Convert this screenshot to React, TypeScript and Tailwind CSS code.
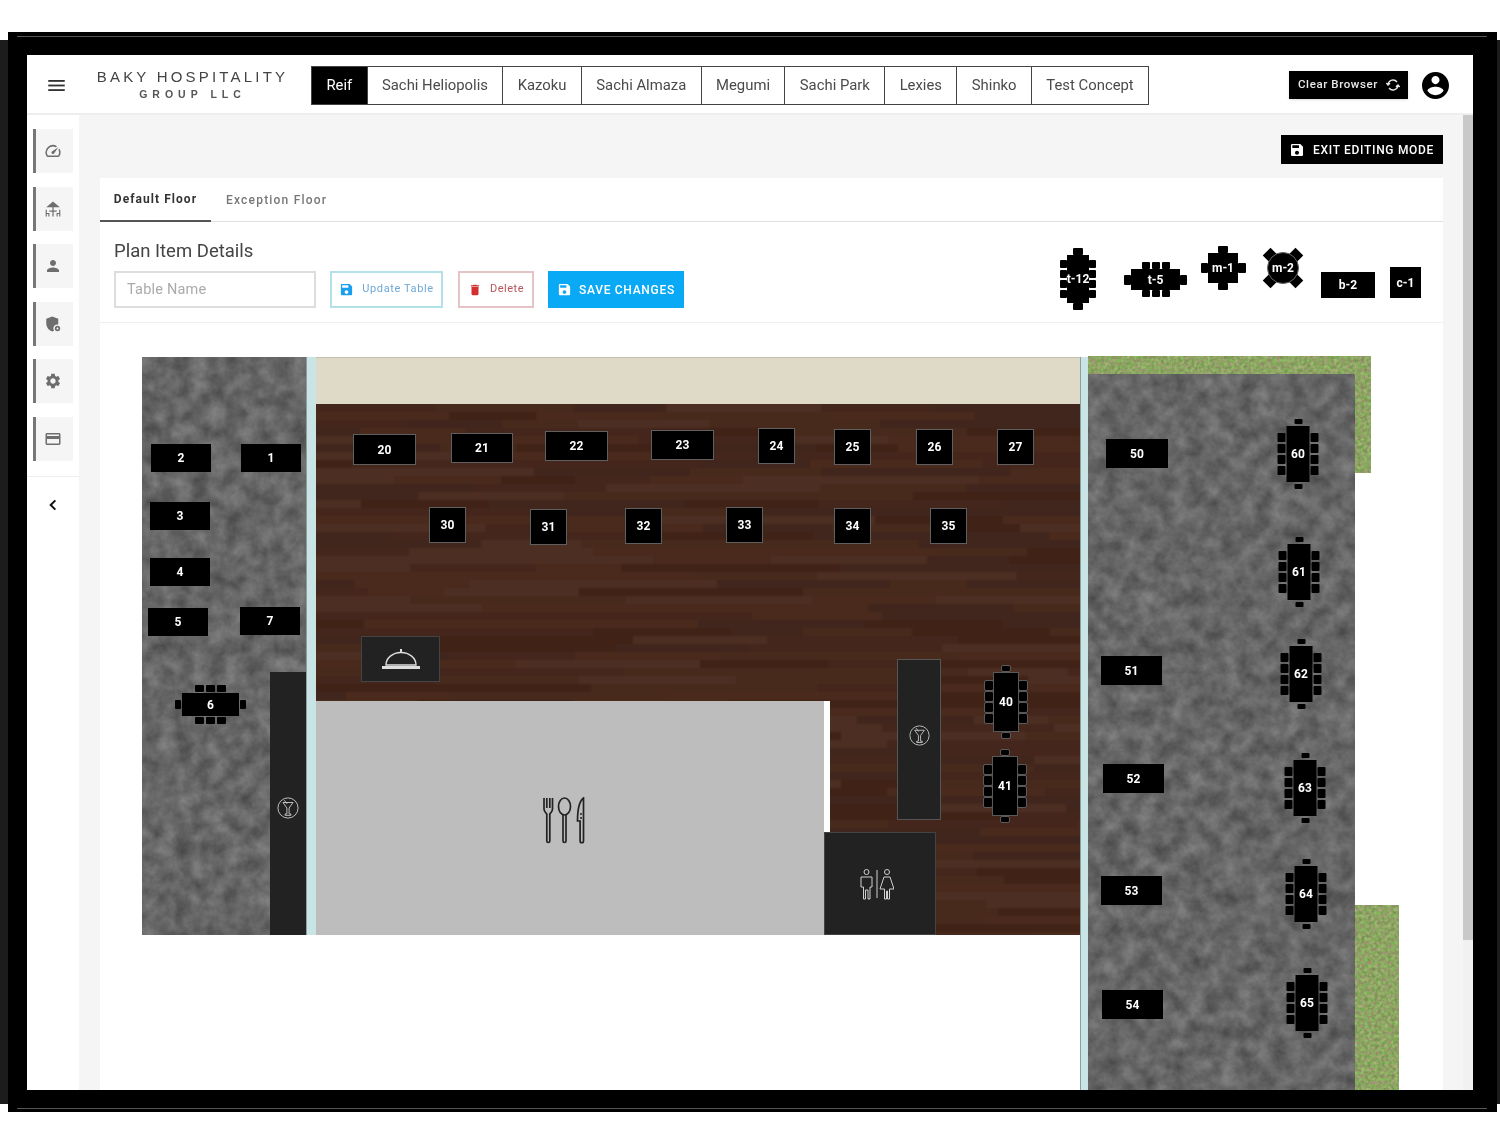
import React from 'react';

const TABS = ['Reif', 'Sachi Heliopolis', 'Kazoku', 'Sachi Almaza', 'Megumi', 'Sachi Park', 'Lexies', 'Shinko', 'Test Concept'];

// canvas origin on the page, the plan below is measured in page pixels
const OX = 100;
const OY = 323;

const RECTS: [string, number, number, number, number, boolean][] = [
  ['2', 151, 444, 60, 28, false],
  ['1', 241, 444, 60, 28, false],
  ['3', 150, 502, 60, 28, false],
  ['4', 150, 558, 60, 28, false],
  ['5', 148, 608, 60, 28, false],
  ['7', 240, 607, 60, 28, false],
  ['20', 353, 434, 63, 31, true],
  ['21', 451, 433, 62, 30, true],
  ['22', 545, 431, 63, 30, true],
  ['23', 651, 430, 63, 30, true],
  ['24', 758, 428, 37, 36, true],
  ['25', 834, 429, 37, 36, true],
  ['26', 916, 429, 37, 36, true],
  ['27', 997, 429, 37, 36, true],
  ['30', 429, 507, 37, 36, true],
  ['31', 530, 509, 37, 36, true],
  ['32', 625, 508, 37, 36, true],
  ['33', 726, 507, 37, 36, true],
  ['34', 834, 508, 37, 36, true],
  ['35', 930, 508, 37, 36, true],
  ['50', 1106, 439, 62, 29, false],
  ['51', 1101, 656, 61, 29, false],
  ['52', 1103, 764, 61, 29, false],
  ['53', 1101, 876, 61, 29, false],
  ['54', 1102, 990, 61, 29, false],
];

const LONG_TABLES: [string, number, number, boolean][] = [
  ['40', 1006, 702, true],
  ['41', 1005, 786, true],
  ['60', 1298, 454, false],
  ['61', 1299, 572, false],
  ['62', 1301, 674, false],
  ['63', 1305, 788, false],
  ['64', 1306, 894, false],
  ['65', 1307, 1003, false],
];

function woodPlanks() {
  const colors = ['#45281d', '#4a2b1f', '#41251b', '#4d2e22', '#3f2319', '#47291e'];
  const planks: { x: number; y: number; w: number; c: string }[] = [];
  let seed = 17;
  const next = () => {
    seed = (seed * 9301 + 49297) % 233280;
    return seed / 233280;
  };
  for (let y = 0; y < 540; y += 8) {
    let x = -Math.floor(next() * 120);
    while (x < 770) {
      const w = 70 + Math.floor(next() * 170);
      planks.push({ x, y, w, c: colors[Math.floor(next() * colors.length)] });
      x += w;
    }
  }
  return planks;
}

const PLANKS = woodPlanks();

const Noise = ({ id, freq, seed, matrix }: { id: string; freq: string; seed: number; matrix: string }) => (
  <svg className="absolute inset-0 w-full h-full" aria-hidden="true">
    <filter id={id} x="0" y="0" width="100%" height="100%" colorInterpolationFilters="sRGB">
      <feTurbulence type="fractalNoise" baseFrequency={freq} numOctaves={5} seed={seed} />
      <feColorMatrix type="matrix" values={matrix} />
    </filter>
    <rect width="100%" height="100%" filter={`url(#${id})`} />
  </svg>
);

const CONCRETE = '0.28 0 0 0 0.26 0.28 0 0 0 0.26 0.28 0 0 0 0.26 0 0 0 0 1';
const GRASS = '0.35 0 0 0 0.38 0 0.35 0 0 0.47 0.3 0 0 0 0.24 0 0 0 0 1';

const Wood = () => (
  <svg className="absolute inset-0 w-full h-full" aria-hidden="true">
    <filter id="plankblur">
      <feGaussianBlur stdDeviation="1" />
    </filter>
    <g filter="url(#plankblur)">
      {PLANKS.map((p, i) => (
        <rect key={i} x={p.x} y={p.y} width={p.w} height={8} fill={p.c} />
      ))}
    </g>
  </svg>
);

const Cell = ({ className }: { className: string }) => <div className={`bg-black rounded-[1px] ${className}`} />;

const Repeat = ({ n, className }: { n: number; className: string }) => (
  <>
    {Array.from({ length: n }).map((_, i) => (
      <Cell key={i} className={className} />
    ))}
  </>
);

const LongTable = ({ label, outlined, big }: { label: string; outlined?: boolean; big?: boolean }) => {
  const line = outlined ? 'outline outline-1 outline-[#5a5a5a]' : '';
  return (
    <div className="flex flex-col items-center text-white font-bold text-[12px]">
      <Cell className={`${big ? 'w-[10px] h-[7px]' : 'w-[8px] h-[5px]'} ${line}`} />
      <div className={`flex items-center ${big ? 'my-0' : 'my-[2px] gap-[1px]'}`}>
        <div className="flex flex-col gap-[2px]">
          <Repeat n={4} className={`${big ? 'w-[7px] h-[8px]' : 'w-[8px] h-[9px]'} ${line}`} />
        </div>
        <div className={`flex items-center justify-center whitespace-nowrap bg-black ${line} ${big ? 'w-[22px] h-[48px]' : outlined ? 'w-[24px] h-[58px]' : 'w-[23px] h-[56px]'}`}>
          {label}
        </div>
        <div className="flex flex-col gap-[2px]">
          <Repeat n={4} className={`${big ? 'w-[7px] h-[8px]' : 'w-[8px] h-[9px]'} ${line}`} />
        </div>
      </div>
      <Cell className={`${big ? 'w-[10px] h-[7px]' : 'w-[8px] h-[5px]'} ${line}`} />
    </div>
  );
};

const WideTable = ({ label, big }: { label: string; big?: boolean }) => (
  <div className={`flex items-center text-white font-bold text-[12px] ${big ? '' : 'gap-[1px]'}`}>
    <Cell className={big ? 'w-[7px] h-[10px]' : 'w-[6px] h-[9px]'} />
    <div className={`flex flex-col items-center ${big ? '' : 'gap-[1px]'}`}>
      <div className="flex gap-[2px]">
        <Repeat n={3} className={big ? 'w-[8px] h-[7px]' : 'w-[9px] h-[7px]'} />
      </div>
      <div className={`flex items-center justify-center bg-black ${big ? 'w-[49px] h-[21px]' : 'w-[57px] h-[23px]'}`}>{label}</div>
      <div className="flex gap-[2px]">
        <Repeat n={3} className={big ? 'w-[8px] h-[7px]' : 'w-[9px] h-[7px]'} />
      </div>
    </div>
    <Cell className={big ? 'w-[7px] h-[10px]' : 'w-[6px] h-[9px]'} />
  </div>
);

const SquareTable = () => (
  <div className="grid grid-cols-[7px_30px_8px] grid-rows-[7px_30px_7px] place-items-center text-white font-bold text-[12px]">
    <span />
    <Cell className="w-[10px] h-[7px]" />
    <span />
    <Cell className="w-[7px] h-[10px]" />
    <div className="w-[30px] h-[30px] bg-black flex items-center justify-center">m-1</div>
    <Cell className="w-[8px] h-[10px]" />
    <span />
    <Cell className="w-[10px] h-[7px]" />
    <span />
  </div>
);

const RoundTable = () => (
  <div className="relative w-[40px] h-[40px] text-white font-bold text-[12px]">
    <div className="absolute left-[2px] top-[2px] w-[11px] h-[11px] bg-black rotate-45" />
    <div className="absolute right-[2px] top-[2px] w-[11px] h-[11px] bg-black rotate-45" />
    <div className="absolute left-[2px] bottom-[2px] w-[11px] h-[11px] bg-black rotate-45" />
    <div className="absolute right-[2px] bottom-[2px] w-[11px] h-[11px] bg-black rotate-45" />
    <div className="absolute left-[4px] top-[4px] w-[32px] h-[32px] rounded-full bg-black border border-[#666] flex items-center justify-center">m-2</div>
  </div>
);

const SaveIcon = ({ className }: { className: string }) => (
  <svg viewBox="0 0 24 24" className={className} fill="currentColor">
    <path d="M17 3H5c-1.11 0-2 .9-2 2v14c0 1.1.89 2 2 2h14c1.1 0 2-.9 2-2V7l-4-4zm-5 16c-1.66 0-3-1.34-3-3s1.34-3 3-3 3 1.34 3 3-1.34 3-3 3zm3-10H5V5h10v4z" />
  </svg>
);

const SideIcon = ({ children }: { children: React.ReactNode }) => (
  <svg viewBox="0 0 24 24" className="w-[18px] h-[18px] mr-[3px] text-[#6e6e6e]" fill="currentColor">
    {children}
  </svg>
);

const SIDE_ITEMS = [
  <SideIcon key="speed">
    <path d="M20.38 8.57l-1.23 1.85a8 8 0 0 1-.22 7.58H5.07A8 8 0 0 1 15.58 6.85l1.85-1.23A10 10 0 0 0 3.35 19a2 2 0 0 0 1.72 1h13.85a2 2 0 0 0 1.74-1 10 10 0 0 0-.27-10.44zm-9.79 6.84a2 2 0 0 0 2.83 0l5.66-8.49-8.49 5.66a2 2 0 0 0 0 2.83z" />
  </SideIcon>,
  <SideIcon key="patio">
    <path d="M12 2l9 7.5H3z" />
    <rect x="11.2" y="9" width="1.6" height="13" />
    <rect x="7" y="14" width="10" height="1.6" />
    <path d="M3 13v9M3 18h3.5v4M21 13v9M21 18h-3.5v4" fill="none" stroke="currentColor" strokeWidth="1.5" />
  </SideIcon>,
  <SideIcon key="person">
    <path d="M12 12c2.21 0 4-1.79 4-4s-1.79-4-4-4-4 1.79-4 4 1.79 4 4 4zm0 2c-2.67 0-8 1.34-8 4v2h16v-2c0-2.66-5.33-4-8-4z" />
  </SideIcon>,
  <SideIcon key="admin">
    <path d="M11 2L3 5v6c0 5.2 3.4 9.6 8 11 4.6-1.4 8-5.8 8-11V5z" />
    <circle cx="18" cy="18" r="5.5" fill="#f5f5f5" />
    <circle cx="18" cy="18" r="3.6" />
    <circle cx="18" cy="18" r="1.3" fill="#f5f5f5" />
  </SideIcon>,
  <SideIcon key="settings">
    <path d="M19.14 12.94c.04-.3.06-.61.06-.94 0-.32-.02-.64-.07-.94l2.03-1.58c.18-.14.23-.41.12-.61l-1.92-3.32c-.12-.22-.37-.29-.59-.22l-2.39.96c-.5-.38-1.03-.7-1.62-.94l-.36-2.54c-.04-.24-.24-.41-.48-.41h-3.84c-.24 0-.43.17-.47.41l-.36 2.54c-.59.24-1.13.57-1.62.94l-2.39-.96c-.22-.08-.47 0-.59.22L2.74 8.87c-.12.21-.08.47.12.61l2.03 1.58c-.05.3-.09.63-.09.94s.02.64.07.94l-2.03 1.58c-.18.14-.23.41-.12.61l1.92 3.32c.12.22.37.29.59.22l2.39-.96c.5.38 1.03.7 1.62.94l.36 2.54c.05.24.24.41.48.41h3.84c.24 0 .44-.17.47-.41l.36-2.54c.59-.24 1.13-.56 1.62-.94l2.39.96c.22.08.47 0 .59-.22l1.92-3.32c.12-.22.07-.47-.12-.61l-2.01-1.58zM12 15.6c-1.98 0-3.6-1.62-3.6-3.6s1.62-3.6 3.6-3.6 3.6 1.62 3.6 3.6-1.62 3.6-3.6 3.6z" />
  </SideIcon>,
  <SideIcon key="card">
    <path d="M20 4H4c-1.11 0-1.99.89-1.99 2L2 18c0 1.11.89 2 2 2h16c1.11 0 2-.89 2-2V6c0-1.11-.89-2-2-2zm0 14H4v-6h16v6zm0-10H4V6h16v2z" />
  </SideIcon>,
];

const Martini = ({ className }: { className: string }) => (
  <svg viewBox="0 0 24 24" className={className} fill="none" stroke="#c9c9c9" strokeWidth="1">
    <circle cx="12" cy="12" r="11" />
    <path d="M6.5 6h11L13.2 12v6.5h2v1.5H8.8v-1.5h2V12z" />
    <path d="M8 3.5l3 4" />
  </svg>
);

const Sidebar = () => (
  <aside className="w-[52px] shrink-0 bg-white flex flex-col pt-[14px]">
    <div className="flex flex-col gap-[13.6px] pl-[6px]">
      {SIDE_ITEMS.map((icon, i) => (
        <div key={i} className="w-[40px] h-[44px] border-l-[3px] border-[#777] bg-[#f5f5f5] flex items-center justify-center">
          {icon}
        </div>
      ))}
    </div>
    <div className="mt-[15px] border-t border-[#eeeeee] flex justify-center pt-[21px]">
      <svg viewBox="0 0 24 24" className="w-[14px] h-[14px]" fill="none" stroke="#111" strokeWidth="3.4">
        <path d="M16 4l-8 8 8 8" />
      </svg>
    </div>
  </aside>
);

const Header = () => (
  <header className="h-[60px] shrink-0 flex items-center bg-white border-b-2 border-[#eeeeee]">
    <svg viewBox="0 0 18 12" className="w-[17px] h-[11px] ml-[21px] mt-[2px] text-[#333]" fill="currentColor">
      <rect width="18" height="2" />
      <rect y="5" width="18" height="2" />
      <rect y="10" width="18" height="2" />
    </svg>
    <div className="ml-[31px] w-[193px] text-center text-[#444] font-['Liberation_Sans',sans-serif] leading-none">
      <div className="text-[15px] tracking-[3.2px] whitespace-nowrap">BAKY HOSPITALITY</div>
      <div className="mt-[5px] text-[10.5px] tracking-[5px] font-bold text-[#555] whitespace-nowrap">GROUP LLC</div>
    </div>
    <nav className="ml-[22px] flex h-[39px] mt-[3px] border border-[#444]">
      {TABS.map((t, i) => (
        <div key={t} className={`flex items-center px-[14.4px] text-[14.85px] whitespace-nowrap ${i === 0 ? 'bg-black text-white' : 'text-[#4a4a4a] border-l border-[#444]'}`}>
          {t}
        </div>
      ))}
    </nav>
    <button className="ml-auto flex items-center h-[28px] w-[119px] mt-[2px] bg-black text-[#e8e8e8] text-[11.5px] font-medium tracking-[0.6px] pl-[9px] shadow-sm whitespace-nowrap">
      Clear Browser
      <svg viewBox="0 0 24 24" className="w-[16px] h-[16px] ml-[7px] shrink-0" fill="none" stroke="#e8e8e8" strokeWidth="2">
        <path d="M18 7.5A7.5 7.5 0 0 0 4.6 11M2 9l2.6 3 3-2.5M6 16.5A7.5 7.5 0 0 0 19.4 13M22 15l-2.6-3-3 2.5" />
      </svg>
    </button>
    <svg viewBox="2 2 20 20" className="w-[27px] h-[27px] ml-[14px] mr-[24px] mt-[2px] text-black" fill="currentColor">
      <path d="M12 2C6.48 2 2 6.48 2 12s4.48 10 10 10 10-4.48 10-10S17.52 2 12 2zm0 3c1.66 0 3 1.34 3 3s-1.34 3-3 3-3-1.34-3-3 1.34-3 3-3zm0 14.2c-2.5 0-4.71-1.28-6-3.22.03-1.99 4-3.08 6-3.08 1.99 0 5.97 1.09 6 3.08-1.29 1.94-3.5 3.22-6 3.22z" />
    </svg>
  </header>
);

const Details = () => (
  <div className="h-[101px] flex border-b border-[#eeeeee]">
    <div className="pl-[14px] pt-[18px]">
      <h3 className="text-[18.5px] leading-[22px] text-[#444]">Plan Item Details</h3>
      <div className="mt-[9px] flex">
        <div className="w-[202px] h-[37px] border-2 border-[#dddddd] flex items-center pl-[11px] pt-[1px] text-[14.5px] tracking-[0.2px] text-[#aaaaaa]">Table Name</div>
        <button className="ml-[14px] w-[113px] h-[37px] border-2 border-[#b3e1e8] flex items-center justify-center gap-[8px] text-[11px] tracking-[0.6px] text-[#6ea8d6] whitespace-nowrap">
          <SaveIcon className="w-[15px] h-[15px] text-[#1a9ff0] shrink-0" />
          Update Table
        </button>
        <button className="ml-[15px] w-[76px] h-[37px] border-2 border-[#e6c3c7] flex items-center justify-center gap-[8px] text-[11px] tracking-[0.5px] text-[#b5535c]">
          <svg viewBox="0 0 24 24" className="w-[14px] h-[14px] text-[#d32f2f]" fill="currentColor">
            <path d="M6 19c0 1.1.9 2 2 2h8c1.1 0 2-.9 2-2V7H6v12zM19 4h-3.5l-1-1h-5l-1 1H5v2h14V4z" />
          </svg>
          Delete
        </button>
        <button className="ml-[14px] w-[136px] h-[37px] bg-[#0aa9f5] flex items-center justify-center gap-[7px] text-[12px] font-medium tracking-[0.7px] text-white whitespace-nowrap">
          <SaveIcon className="w-[15px] h-[15px] shrink-0" />
          SAVE CHANGES
        </button>
      </div>
    </div>
    <div className="ml-auto mr-[22px] pt-[24px] flex items-start text-center">
      <div className="mt-[2px]"><LongTable label="t-12" big /></div>
      <div className="ml-[28px] mt-[16px]"><WideTable label="t-5" big /></div>
      <div className="ml-[14px]"><SquareTable /></div>
      <div className="ml-[17px] mt-[2px]"><RoundTable /></div>
      <div className="ml-[18px] mt-[26px] w-[54px] h-[26px] bg-black text-white font-bold text-[12px] flex items-center justify-center">b-2</div>
      <div className="ml-[15px] mt-[21px] w-[31px] h-[31px] bg-black text-white font-bold text-[12px] flex items-center justify-center">c-1</div>
    </div>
  </div>
);

const FloorPlan = () => (
  <div className="relative flex-1">
    {/* rooms */}
    <div className="absolute left-[42px] top-[34px] w-[164px] h-[578px] bg-[#666] overflow-hidden">
      <Noise id="concrete-left" freq="0.06" seed={4} matrix={CONCRETE} />
    </div>
    <div className="absolute left-[170px] top-[349px] w-[36px] h-[263px] bg-[#222] flex items-center justify-center">
      <Martini className="w-[22px] h-[22px] mt-[9px]" />
    </div>
    <div className="absolute left-[206px] top-[34px] w-[10px] h-[578px] bg-[#c9e4e4] border-l border-[#8f9f9f]" />
    <div className="absolute left-[216px] top-[34px] w-[764px] h-[47px] bg-[#dfd9c7] border-t border-[#c4c0b0]" />
    <div className="absolute left-[216px] top-[81px] w-[764px] h-[531px] bg-[#45281d] overflow-hidden">
      <Wood />
    </div>
    <div className="absolute left-[216px] top-[378px] w-[508px] h-[234px] bg-[#bdbdbd] flex items-center justify-center">
      <svg viewBox="0 0 42 47" className="w-[42px] h-[47px] mt-[4px] mr-[12px]" fill="none" stroke="#222" strokeWidth="1.7">
        <path d="M1 1v11c0 3 2.3 4 2.8 5v27a1.5 1.5 0 0 0 3 0V17c.5-1 2.7-2 2.7-5V1M3.8 1v10M6.8 1v10" />
        <ellipse cx="21.5" cy="9.5" rx="6" ry="8.5" />
        <path d="M20 18v26a1.5 1.5 0 0 0 3 0V18" />
        <path d="M40.5 1c-4 3-6 11-6 23h2.6v20a1.7 1.7 0 0 0 3.4 0zM37 17h2M37 21h2" />
      </svg>
    </div>
    <div className="absolute left-[724px] top-[378px] w-[6px] h-[131px] bg-white" />
    <div className="absolute left-[724px] top-[509px] w-[112px] h-[103px] bg-[#222] border border-[#444] flex items-center justify-center">
      <svg viewBox="0 0 34 31" className="w-[34px] h-[31px] mt-[2px] mr-[6px]" fill="none" stroke="#d0d0d0" strokeWidth="1">
        <circle cx="6.5" cy="3" r="2.5" />
        <path d="M1 8h11v10h-2v12H8v-9H5.5v9h-2V18H1z" />
        <path d="M17 1v28" />
        <circle cx="27" cy="3" r="2.5" />
        <path d="M24 8h6l4 12h-4.5v10h-2v-8h-1v8h-2V20H20z" />
      </svg>
    </div>
    <div className="absolute left-[261px] top-[313px] w-[79px] h-[46px] bg-[#222] border border-[#444] flex items-center justify-center">
      <svg viewBox="0 0 38 21" className="w-[38px] h-[21px]" fill="#ddd">
        <rect x="18" y="0" width="2" height="4" />
        <path d="M4 16a15 12.5 0 0 1 30 0z" fill="none" stroke="#ddd" strokeWidth="1.4" />
        <rect x="0" y="17" width="38" height="3" />
      </svg>
    </div>
    <div className="absolute left-[797px] top-[336px] w-[44px] h-[161px] bg-[#222] border border-[#555] flex items-center justify-center">
      <Martini className="w-[21px] h-[21px] mb-[8px]" />
    </div>
    <div className="absolute left-[980px] top-[34px] w-[8px] h-[740px] bg-[#c9e4e4] border-l border-[#8f9f9f]" />
    <div className="absolute left-[988px] top-[33px] w-[283px] h-[117px] bg-[#8da663] overflow-hidden">
      <Noise id="grass-top" freq="0.3" seed={9} matrix={GRASS} />
    </div>
    <div className="absolute left-[1255px] top-[582px] w-[44px] h-[190px] bg-[#8da663] overflow-hidden">
      <Noise id="grass-side" freq="0.3" seed={2} matrix={GRASS} />
    </div>
    <div className="absolute left-[988px] top-[51px] w-[267px] h-[720px] bg-[#666] overflow-hidden">
      <Noise id="concrete-right" freq="0.06" seed={7} matrix={CONCRETE} />
    </div>

    {/* tables */}
    {RECTS.map(([label, x, y, w, h, outlined]) => (
      <div
        key={label}
        className={`absolute flex items-center justify-center bg-black text-white font-bold text-[12px] ${outlined ? 'border border-[#5f5f5f]' : ''}`}
        style={{ left: x - OX, top: y - OY, width: w, height: h }}
      >
        {label}
      </div>
    ))}
    {LONG_TABLES.map(([label, cx, cy, outlined]) => (
      <div key={label} className="absolute -translate-x-1/2 -translate-y-1/2" style={{ left: cx - OX, top: cy - OY }}>
        <LongTable label={label} outlined={outlined} />
      </div>
    ))}
    <div className="absolute left-[75px] top-[362px]">
      <WideTable label="6" />
    </div>
  </div>
);

export default function App() {
  return (
    <div className="relative w-[1500px] h-[1145px] overflow-hidden bg-white font-['Roboto',sans-serif] blur-[0.4px]">
      {/* the dark strips behind the frame */}
      <div className="absolute left-0 top-[40px] w-[1500px] h-[1064px] bg-[#1c1c1c]" />
      <div className="absolute left-[8px] top-[32px] w-[1489px] h-[1080px] bg-black border-y-[4px] border-black p-[19px_24px_18px_19px]">
        <div className="flex flex-col w-[1446px] h-[1035px] bg-white overflow-hidden">
          <Header />
          <div className="flex flex-1 min-h-0">
            <Sidebar />
            <main className="flex-1 min-w-0 flex flex-col bg-[#f5f5f5] pl-[21px] pr-[20px] pt-[20px] overflow-hidden">
              <div className="flex justify-end">
                <button className="flex items-center h-[29px] w-[162px] bg-black text-white text-[12px] font-medium tracking-[0.7px] pl-[8px] gap-[8px] whitespace-nowrap">
                  <SaveIcon className="w-[16px] h-[16px] shrink-0" />
                  EXIT EDITING MODE
                </button>
              </div>
              <section className="mt-[14px] flex-1 flex flex-col bg-white">
                <div className="h-[44px] flex border-b border-[#e0e0e0] text-[12px] font-bold tracking-[1.05px]">
                  <div className="w-[111px] h-[44px] border-b-2 border-[#555] flex items-center justify-center text-[#333]">Default Floor</div>
                  <div className="ml-[15px] flex items-center text-[#777] font-medium tracking-[1.2px]">Exception Floor</div>
                </div>
                <Details />
                <FloorPlan />
              </section>
            </main>
            <div className="w-[10px] shrink-0 bg-[#f1f1f1]">
              <div className="h-[825px] bg-[#c9c9c9]" />
            </div>
          </div>
        </div>
      </div>
      <div className="absolute left-[17px] top-[36px] w-[1470px] h-px bg-[#555]" />
      <div className="absolute left-[17px] top-[1108px] w-[1470px] h-px bg-[#555]" />
    </div>
  );
}
